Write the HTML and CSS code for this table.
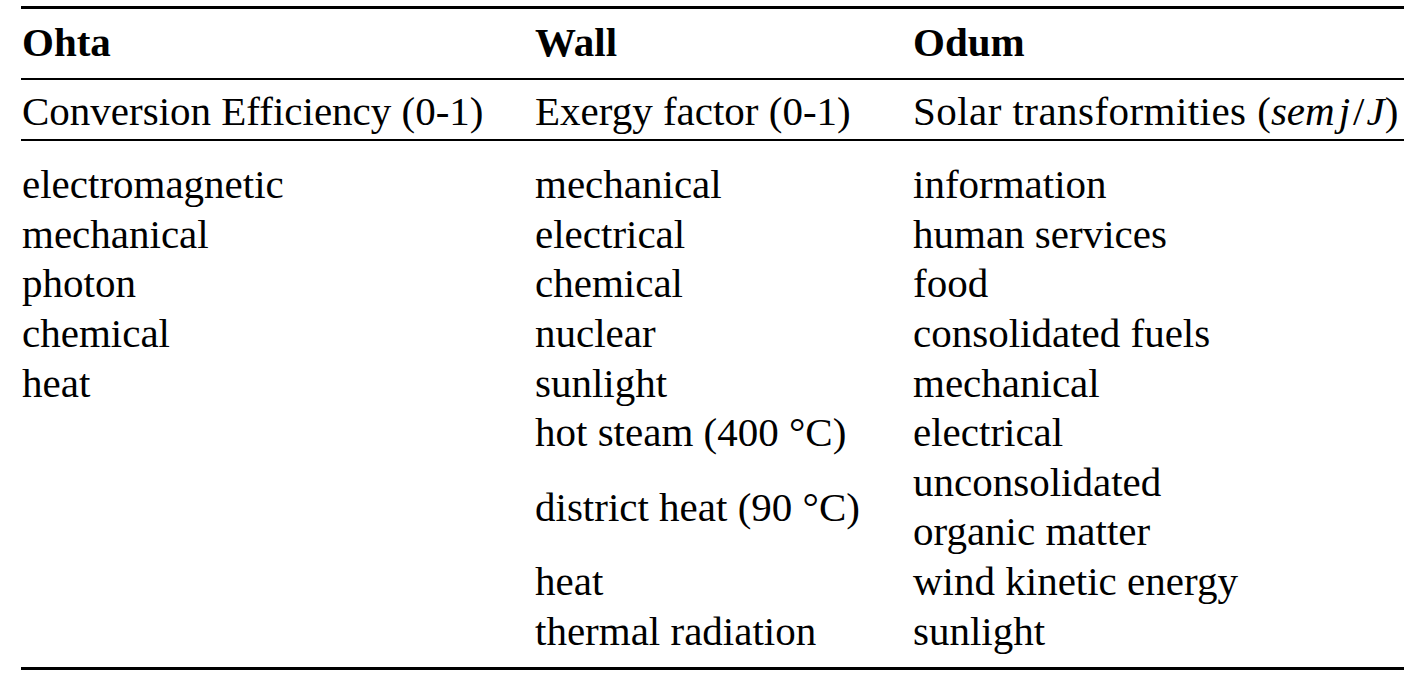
FILE: index.html
```html
<!DOCTYPE html>
<html lang="en">
<head>
  <meta charset="UTF-8">
  <title>Energy quality rankings</title>
  <link rel="stylesheet" href="styles.css">
</head>
<body>
<table class="ranking">
  <colgroup>
    <col class="col-ohta">
    <col class="col-wall">
    <col class="col-odum">
  </colgroup>
  <thead>
    <tr class="head">
      <th>Ohta</th>
      <th>Wall</th>
      <th>Odum</th>
    </tr>
    <tr class="units">
      <td>Conversion Efficiency (0-1)</td>
      <td>Exergy factor (0-1)</td>
      <td><span class="wide">Solar transformities </span><span class="math">(<i>sem</i><i class="j">j</i><span class="slash">/</span><i>J</i>)</span></td>
    </tr>
  </thead>
  <tbody>
    <tr class="first">
      <td>electromagnetic</td>
      <td>mechanical</td>
      <td>information</td>
    </tr>
    <tr>
      <td>mechanical</td>
      <td>electrical</td>
      <td>human services</td>
    </tr>
    <tr>
      <td>photon</td>
      <td>chemical</td>
      <td>food</td>
    </tr>
    <tr>
      <td>chemical</td>
      <td>nuclear</td>
      <td>consolidated fuels</td>
    </tr>
    <tr>
      <td>heat</td>
      <td>sunlight</td>
      <td>mechanical</td>
    </tr>
    <tr>
      <td></td>
      <td>hot steam (400 °C)</td>
      <td>electrical</td>
    </tr>
    <tr>
      <td></td>
      <td>district heat (90 °C)</td>
      <td>unconsolidated<br>organic matter</td>
    </tr>
    <tr>
      <td></td>
      <td>heat</td>
      <td>wind kinetic energy</td>
    </tr>
    <tr class="last">
      <td></td>
      <td>thermal radiation</td>
      <td>sunlight</td>
    </tr>
  </tbody>
</table>
</body>
</html>
```

FILE: styles.css
```css
/* booktabs-style table */
body {
  margin: 0;
  background: #fff;
  color: #000;
  font-family: "Liberation Serif", "Times New Roman", serif;
}
.ranking {
  margin: 6px 0 0 21px;
  width: 1383px;
  table-layout: fixed;
  border-collapse: collapse;
  border-top: 3px solid #000;
  border-bottom: 3px solid #000;
  font-size: 41px;
  line-height: 49.6px;
}
.col-ohta { width: 513px; }
.col-wall { width: 378px; }
.col-odum { width: 492px; }
.ranking th,
.ranking td {
  padding: 0 0 0 1px;
  text-align: left;
  vertical-align: middle;
  white-space: nowrap;
}
.ranking th {
  font-weight: bold;
  padding-top: 9px;
  padding-bottom: 10px;
  border-bottom: 2px solid #000;
}
.units td {
  padding-top: 7px;
  padding-bottom: 3px;
  border-bottom: 2px solid #000;
}
.first td {
  padding-top: 19px;
}
.last td {
  padding-bottom: 11px;
}
.wide {
  letter-spacing: 0.45px;
}
.math i {
  font-style: italic;
}
.math .j {
  margin-left: 4px;
}
.math .slash {
  margin: 0 2px 0 3px;
}
```
